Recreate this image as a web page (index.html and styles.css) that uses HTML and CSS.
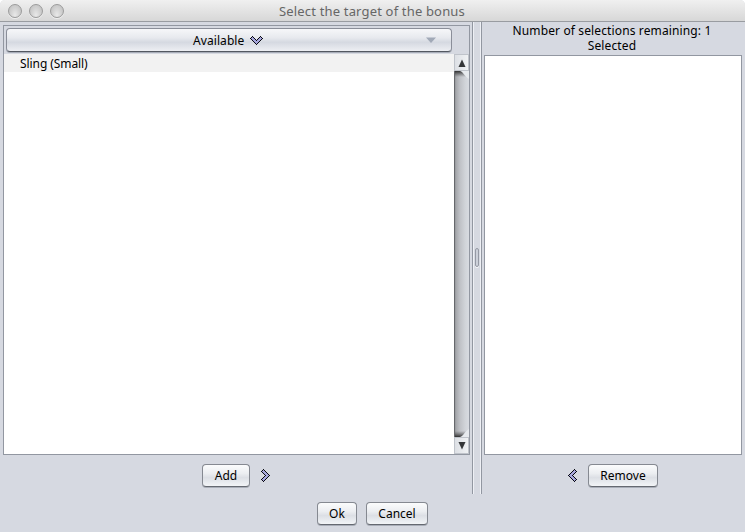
FILE: index.html
```html
<!DOCTYPE html>
<html lang="en">
<head>
<meta charset="utf-8">
<title>Select the target of the bonus</title>
<link rel="stylesheet" href="styles.css">
</head>
<body>
<div class="window">
  <header class="titlebar">
    <div class="lights"><i></i><i></i><i></i></div>
    <h1>Select the target of the bonus</h1>
  </header>
  <main class="split">
    <section class="left">
      <div class="table">
        <div class="head">
          <div class="column"><span class="t-available">Available</span>
            <svg class="sort" width="13" height="9" viewBox="0 0 13 9" shape-rendering="crispEdges">
              <g id="chevron"><path d="M.5 2.5l2-2 4 4 4-4 2 2-6 6z" fill="#a7a7dc"/><path d="M2 .5h1M10 .5h1M1 1.5h1M3 1.5h1M9 1.5h1M11 1.5h1M0 2.5h1M4 2.5h1M8 2.5h1M12 2.5h1M1 3.5h1M5 3.5h1M7 3.5h1M11 3.5h1M2 4.5h1M6 4.5h1M10 4.5h1M3 5.5h1M9 5.5h1M4 6.5h1M8 6.5h1M5 7.5h1M7 7.5h1M6 8.5h1" stroke="#080810"/></g>
            </svg>
            <svg class="arrow" width="10" height="6" viewBox="0 0 10 6"><path d="M0 .5h10L5 6z" fill="#a1a9b7"/></svg>
          </div>
        </div>
        <div class="body">
          <div class="rows"><div class="row"><span class="t-sling">Sling (Small)</span></div></div>
          <div class="scroll">
            <div class="step"><svg width="8" height="8" viewBox="0 0 8 8"><path d="M4 .5L7.5 8h-7z" fill="#343638"/></svg></div>
            <div class="track"><svg width="15" height="366" viewBox="0 0 15 366">
              <defs>
                <linearGradient id="g"><stop offset="0" stop-color="#747578"/><stop offset=".12" stop-color="#a4a6aa"/><stop offset=".4" stop-color="#bfc1c6"/><stop offset=".75" stop-color="#d1d4d9"/><stop offset="1" stop-color="#d8dbe1"/></linearGradient>
                <linearGradient id="s" x2="0" y2="1"><stop stop-color="#222" stop-opacity=".9"/><stop offset="1" stop-color="#444" stop-opacity="0"/></linearGradient>
                <linearGradient id="b" x2="0" y1="1" y2="0"><stop stop-color="#222" stop-opacity=".9"/><stop offset="1" stop-color="#444" stop-opacity="0"/></linearGradient>
              </defs>
              <path d="M0 0h6C10 1 11 6 15 8v350c-4 2-5 7-9 8H0z" fill="url(#g)"/>
              <path d="M0 0h6c3 1 4 4 6 6H0z" fill="url(#s)"/>
              <path d="M0 366h6c3-1 4-4 6-6H0z" fill="url(#b)"/>
              <path d="M.5 0v366" stroke="#66686c"/>
            </svg></div>
            <div class="step"><svg width="8" height="8" viewBox="0 0 8 8"><path d="M.5 0h7L4 7.5z" fill="#343638"/></svg></div>
          </div>
        </div>
      </div>
      <div class="actions"><button class="add"><span>Add</span></button>
        <svg class="next" width="9" height="13" viewBox="0 0 9 13" shape-rendering="crispEdges"><use href="#chevron" transform="matrix(0 1 1 0 0 0)"/></svg>
      </div>
    </section>
    <div class="divider"><i class="grip"></i></div>
    <section class="right">
      <div class="labels">Number of selections remaining: 1<br>Selected</div>
      <div class="list"></div>
      <div class="actions">
        <svg class="prev" width="9" height="13" viewBox="0 0 9 13" shape-rendering="crispEdges"><use href="#chevron" transform="matrix(0 1 -1 0 9 0)"/></svg>
        <button class="remove"><span>Remove</span></button></div>
    </section>
  </main>
  <footer class="footer"><button class="ok"><span>Ok</span></button><button class="cancel"><span>Cancel</span></button></footer>
</div>
</body>
</html>
```
FILE: styles.css
```css
* { box-sizing: border-box; }
body { margin: 0; background: #fff; color: #000; font: 12px/15px "Noto Sans", "Open Sans", sans-serif; }
.window { width: 745px; height: 532px; display: flex; flex-direction: column; background: #d6d9e1; border-radius: 5px 5px 0 0; overflow: hidden; }
.titlebar { height: 22px; flex: none; display: flex; align-items: center; justify-content: center; position: relative; border-bottom: 1px solid #999ca1; background: linear-gradient(#f0f0f0, #d7d7d7); }
.titlebar h1 { margin: 0 1px 0 0; font-size: 13px; font-weight: 400; line-height: 20px; color: #666; letter-spacing: .17px; white-space: nowrap; }
.lights { position: absolute; left: 8px; top: 4px; display: flex; gap: 7px; }
.lights i { width: 14px; height: 14px; border-radius: 50%; border: 1px solid #9b9b9b; background: radial-gradient(ellipse at 50% 85%, #e9e9e9 0, #d2d2d2 50%, #bcbcbc 100%); box-shadow: 0 1px 0 #eee; }
.split { height: 472px; flex: none; display: flex; }
.left { width: 472px; flex: none; padding: 3px 2px 0 3px; }
.table { width: 467px; height: 430px; border: 1px solid #9297a1; display: flex; flex-direction: column; }
.head { height: 28px; flex: none; padding: 2px; }
.column { width: 446px; height: 24px; border: 1px solid #8a8e99; border-bottom: 1px solid #535861; border-radius: 4px; background: linear-gradient(#f6f7f9 0, #e7e9ee 40%, #d5d9e1 60%, #edeff3 100%); display: flex; align-items: center; padding-left: 186px; box-shadow: 0 1px 0 #a8adb8; }
.t-available { letter-spacing: .08px; }
.t-sling { letter-spacing: -.08px; }
.sort { margin-left: 6px; }
.arrow { margin-left: 163px; }
.body { flex: 1; display: flex; }
.rows { width: 450px; background: #fff; }
.row { height: 18px; line-height: 19px; padding-left: 16px; background: #f2f2f2; }
.scroll { width: 15px; display: flex; flex-direction: column; background: #e7eaee; }
.step { height: 17px; flex: none; display: flex; align-items: center; justify-content: center; border: 1px solid #bfc3ca; background: linear-gradient(90deg, #dde0e5, #f0f2f4); }
.track { height: 366px; flex: none; }
.track svg { display: block; }
.actions { display: flex; align-items: center; padding-top: 9px; }
.left .actions { padding-left: 199px; gap: 11px; }
.right .actions { padding-left: 84px; gap: 11px; }
.divider { width: 10px; flex: none; display: flex; align-items: center; justify-content: center; padding-bottom: 2px; border: solid #9297a1; border-width: 0 1px; box-shadow: inset 1px 0 #eef0f5, inset -1px 0 #eef0f5; }
.grip { width: 4px; height: 19px; border: 1px solid #9599a4; border-radius: 2px; background: #ccd0d9; box-shadow: 0 1px #f5f6f8; }
.right { width: 258px; flex: none; margin-left: 2px; }
.labels { height: 33px; padding-top: 1px; text-align: center; margin-left: -2px; letter-spacing: .13px; white-space: nowrap; }
.list { height: 400px; background: #fff; border: 1px solid #9297a1; }
button { height: 23px; padding: 0; border: 1px solid #858991; border-bottom-color: #656971; border-radius: 4px; background: linear-gradient(#fbfcfd 0, #eceef1 40%, #dcdfe5 60%, #f2f4f7 100%); font: inherit; color: #000; display: flex; align-items: center; justify-content: center; box-shadow: 0 1px #a9aeb8; }
.add { width: 48px; }
.remove { width: 70px; }
.ok { width: 40px; }
.cancel { width: 62px; }
.footer { display: flex; gap: 9px; padding: 8px 0 0 317px; }
```
